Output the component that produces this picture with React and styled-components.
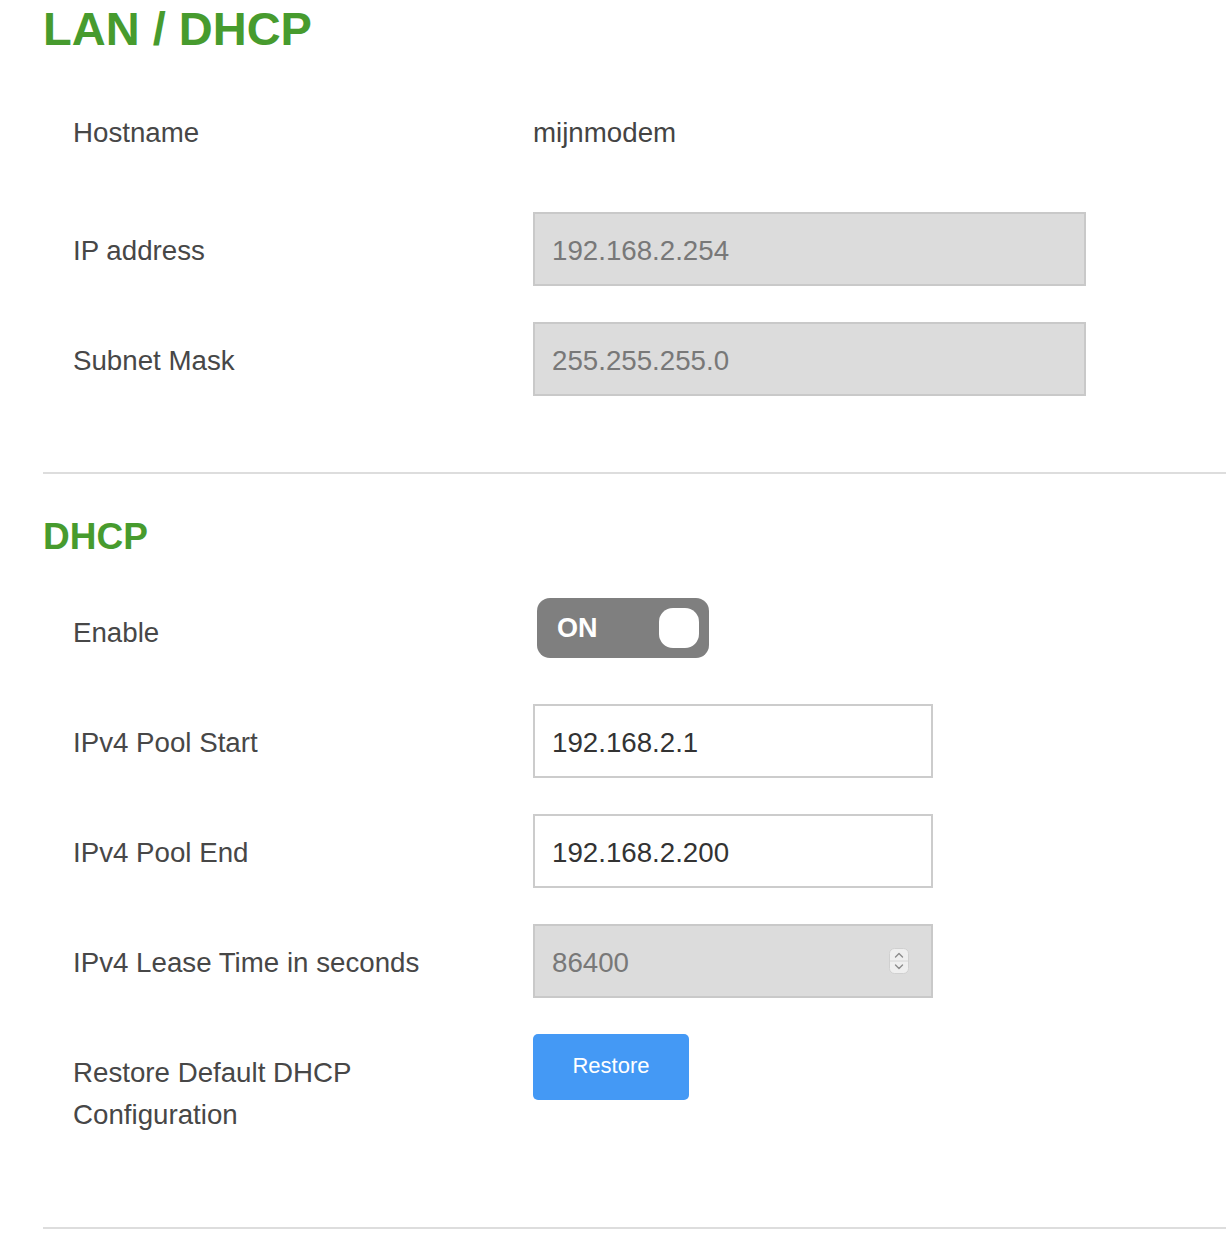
import React from 'react';
import styled, { createGlobalStyle } from 'styled-components';

const GlobalStyle = createGlobalStyle`
  body {
    margin: 0;
    background: #ffffff;
    font-family: "Liberation Sans", Arial, Helvetica, sans-serif;
    color: #4a4a4a;
  }
`;

const lanRows = [
  { label: 'IP address', value: '192.168.2.254', top: 42 },
  { label: 'Subnet Mask', value: '255.255.255.0', top: 36 },
];

const poolRows = [
  { label: 'IPv4 Pool Start', value: '192.168.2.1', top: 39 },
  { label: 'IPv4 Pool End', value: '192.168.2.200', top: 36 },
];

export default function App() {
  return (
    <>
      <GlobalStyle />
      <StyledPage>
        <StyledTitle>LAN / DHCP</StyledTitle>

        <StyledRow $top={39}>
          <StyledLabel>Hostname</StyledLabel>
          <StyledValue>mijnmodem</StyledValue>
        </StyledRow>

        {lanRows.map(row => (
          <StyledRow key={row.label} $top={row.top}>
            <StyledLabel $pad={4}>{row.label}</StyledLabel>
            <StyledField $wide $disabled>{row.value}</StyledField>
          </StyledRow>
        ))}

        <StyledDivider $top={76} />

        <StyledSubTitle>DHCP</StyledSubTitle>

        <StyledRow $top={32}>
          <StyledLabel $pad={10}>Enable</StyledLabel>
          <StyledToggle>
            <StyledToggleText>ON</StyledToggleText>
            <StyledKnob />
          </StyledToggle>
        </StyledRow>

        {poolRows.map(row => (
          <StyledRow key={row.label} $top={row.top}>
            <StyledLabel $pad={4}>{row.label}</StyledLabel>
            <StyledField>{row.value}</StyledField>
          </StyledRow>
        ))}

        <StyledRow $top={36}>
          <StyledLabel $pad={4}>IPv4 Lease Time in seconds</StyledLabel>
          <StyledField $disabled>
            86400
            <StyledSpinner>
              <svg width="20" height="26" viewBox="0 0 20 26">
                <rect x="0.5" y="0.5" width="19" height="25" rx="5" fill="#efefef" stroke="#d0d0d0" />
                <line x1="1" y1="13" x2="19" y2="13" stroke="#d6d6d6" />
                <path d="M6.5 9 L10 5.5 L13.5 9" fill="none" stroke="#8c8c8c" strokeWidth="1.4" strokeLinecap="round" strokeLinejoin="round" />
                <path d="M6.5 17 L10 20.5 L13.5 17" fill="none" stroke="#8c8c8c" strokeWidth="1.4" strokeLinecap="round" strokeLinejoin="round" />
              </svg>
            </StyledSpinner>
          </StyledField>
        </StyledRow>

        <StyledRow $top={36} $start>
          <StyledLabel $pad={18}>
            Restore Default DHCP
            <br />
            Configuration
          </StyledLabel>
          <StyledButton>Restore</StyledButton>
        </StyledRow>

        <StyledDivider $top={91} />
      </StyledPage>
    </>
  );
}

const StyledPage = styled.div`
  padding: 0 0 20px 43px;
`;

const StyledTitle = styled.h1`
  margin: 1px 0 0;
  font-size: 47px;
  line-height: 56px;
  font-weight: bold;
  color: #479b2e;
`;

const StyledSubTitle = styled.h2`
  margin: 41px 0 0;
  font-size: 37px;
  line-height: 44px;
  font-weight: bold;
  color: #479b2e;
`;

const StyledRow = styled.div`
  display: grid;
  grid-template-columns: 490px 1fr;
  align-items: ${({ $start }) => ($start ? 'start' : 'center')};
  min-height: 74px;
  margin-top: ${({ $top }) => $top}px;
`;

const StyledLabel = styled.div`
  padding-left: 30px;
  padding-top: ${({ $pad }) => $pad || 0}px;
  font-size: 27.7px;
  line-height: 42px;
  color: #474747;
`;

const StyledValue = styled.div`
  font-size: 27.7px;
  line-height: 42px;
  color: #444444;
`;

const StyledField = styled.div`
  position: relative;
  box-sizing: border-box;
  width: ${({ $wide }) => ($wide ? 553 : 400)}px;
  height: 74px;
  display: flex;
  align-items: center;
  padding: 3px 0 0 17px;
  border: 2px solid ${({ $disabled }) => ($disabled ? '#c9c9c9' : '#cccccc')};
  background: ${({ $disabled }) => ($disabled ? '#dcdcdc' : '#ffffff')};
  color: ${({ $disabled }) => ($disabled ? '#787878' : '#333333')};
  font-size: 27.7px;
`;

const StyledSpinner = styled.span`
  position: absolute;
  right: 22px;
  top: 22px;
  display: flex;
`;

const StyledDivider = styled.div`
  margin-top: ${({ $top }) => $top}px;
  border-top: 2px solid #dddddd;
`;

const StyledToggle = styled.div`
  box-sizing: border-box;
  width: 172px;
  height: 60px;
  margin-left: 4px;
  padding: 0 10px 0 20px;
  display: flex;
  align-items: center;
  justify-content: space-between;
  background: #7f7f7f;
  border-radius: 13px;
`;

const StyledToggleText = styled.span`
  font-size: 27px;
  font-weight: bold;
  color: #ffffff;
`;

const StyledKnob = styled.span`
  width: 40px;
  height: 40px;
  border-radius: 14px;
  background: #ffffff;
`;

const StyledButton = styled.button`
  width: 156px;
  height: 66px;
  border: none;
  border-radius: 5px;
  background: #4499f5;
  color: #ffffff;
  font-family: "Liberation Sans", Arial, sans-serif;
  font-size: 22px;
  padding: 0 0 2px;
`;
